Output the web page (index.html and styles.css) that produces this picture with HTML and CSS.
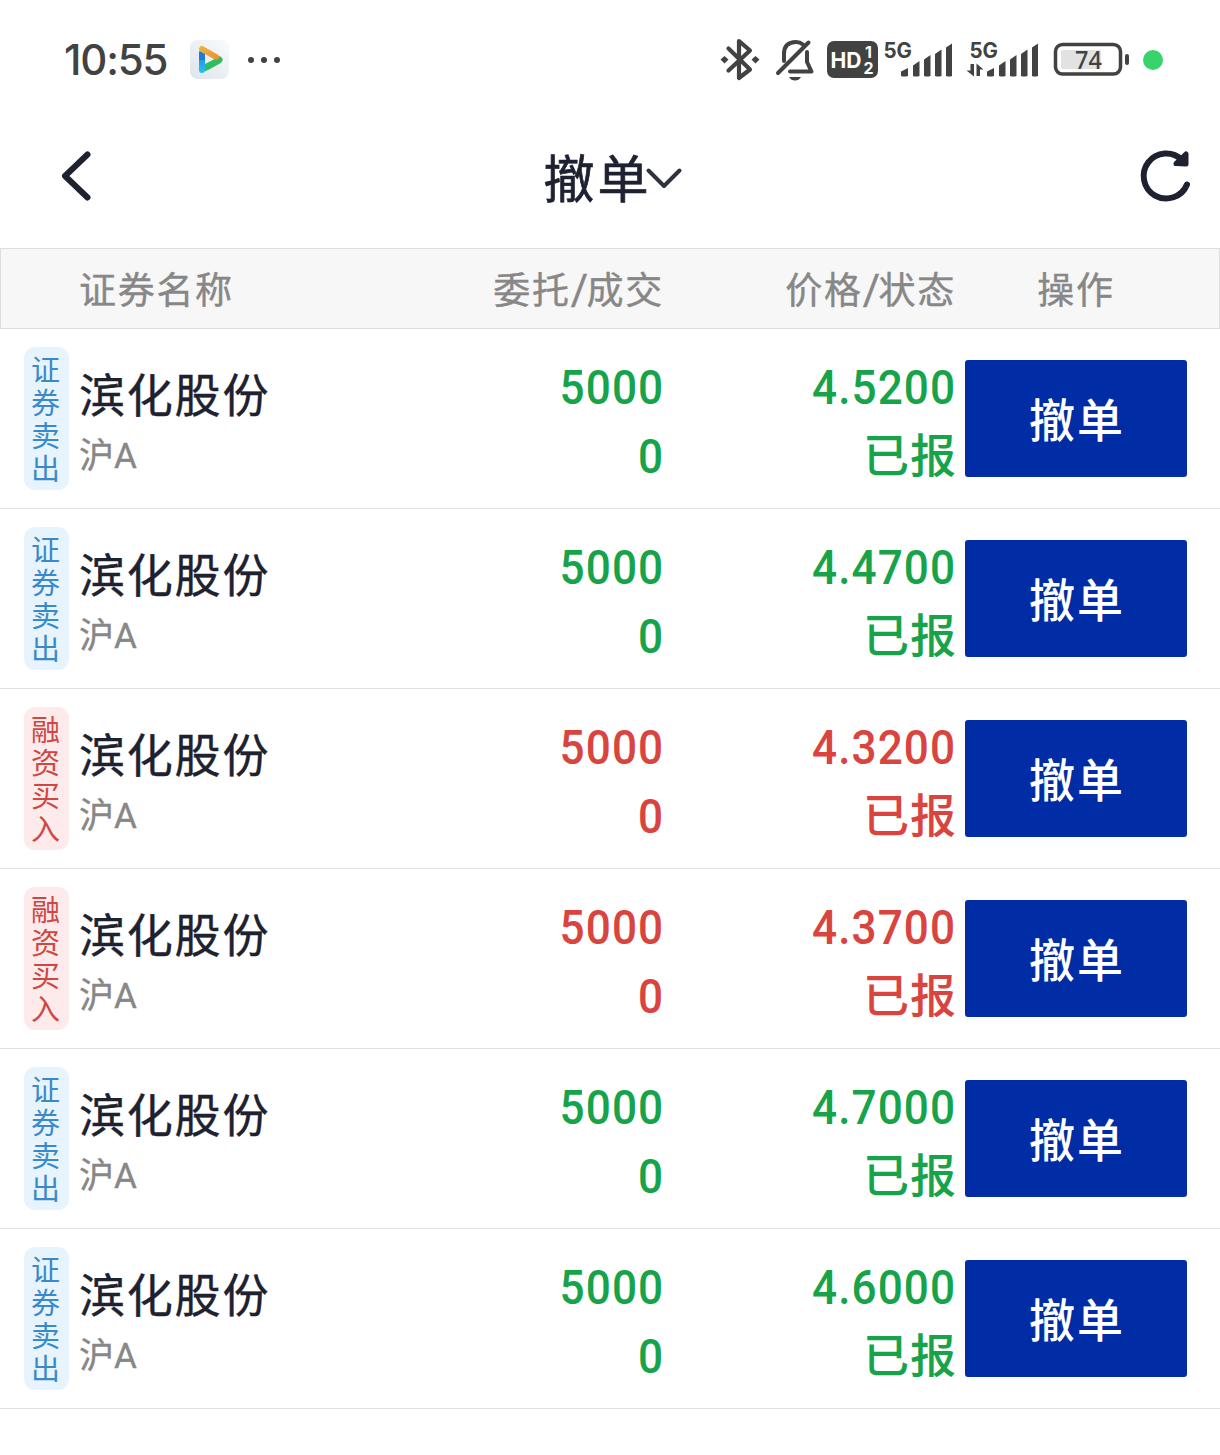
FILE: index.html
```html
<!DOCTYPE html>
<html lang="zh-CN">
<head>
<meta charset="utf-8">
<title>撤单</title>
<link rel="stylesheet" href="styles.css">
</head>
<body>
<div class="status">
  <span class="time">10:55</span>
  <svg class="app" width="40" height="40" viewBox="190 40 40 40">
    <defs>
      <linearGradient id="o" gradientUnits="userSpaceOnUse" x1="200" y1="48" x2="221" y2="59"><stop offset="0" stop-color="#e9b43c"/><stop offset="1" stop-color="#f08a35"/></linearGradient>
      <linearGradient id="b" gradientUnits="userSpaceOnUse" x1="0" y1="48" x2="0" y2="73"><stop offset="0" stop-color="#2478dc"/><stop offset="1" stop-color="#22c4ee"/></linearGradient>
      <linearGradient id="t" x1="1" y1="0" x2="0" y2="1"><stop offset="0" stop-color="#fafbfc"/><stop offset="1" stop-color="#dce4ec"/></linearGradient>
    </defs>
    <rect x="190" y="40" width="39" height="39" rx="8" fill="url(#t)"/>
    <g fill="none" stroke-width="6" stroke-linecap="round">
      <path d="M219.500 59.500L208 66.500" stroke="#31bd61"/>
      <path d="M202 54V70" stroke="url(#b)"/>
      <path d="M202 49L216 57" stroke="url(#o)"/>
    </g>
    <path d="M199 51L205 55V60H199Z" fill="#2478dc"/>
    <path d="M205 64L214 59.500H222.500Q222 62 220 63.500L205 71.500Z" fill="#31bd61"/>
  </svg>
  <svg class="more" width="36" height="8" viewBox="0 0 36 8" fill="#424242"><circle cx="4" cy="4" r="3"/><circle cx="17" cy="4" r="3"/><circle cx="30" cy="4" r="3"/></svg>
  <svg class="system" width="446" height="50" viewBox="720 35 446 50" fill="#424242">
    <path d="M728.500 48.500L750 69.500L739 78V41L750 50.500L728.500 70.500" fill="none" stroke="#424242" stroke-width="4.200" stroke-linejoin="round" stroke-linecap="round"/>
    <path d="M724.500 56l4 3.500-4 4-4-4zM755.500 56l4 3.500-4 4-4-4z"/>
    <g fill="none" stroke="#424242" stroke-width="4" stroke-linecap="round">
      <path d="M784 61V54Q784 42 796 42Q800 42 803 44.500"/>
      <path d="M807 52V62L811.500 71.500H790" stroke-linejoin="round"/>
      <path d="M808.500 42.500L778 73"/>
    </g>
    <path d="M789 77H801Q799 80.500 795 80.500Q791 80.500 789 77Z"/>
    <rect x="827" y="41" width="51" height="37" rx="7"/>
    <g fill="#fff" class="badge-text">
      <text x="830.500" y="67.500" font-size="22" textLength="31" lengthAdjust="spacingAndGlyphs">HD</text>
      <text x="865" y="57.500" font-size="16">1</text>
      <text x="863.500" y="74" font-size="16">2</text>
    </g>
    <g class="net"><text x="883.500" y="58" font-size="21" textLength="28.500" lengthAdjust="spacingAndGlyphs">5G</text><text x="969.500" y="58" font-size="21" textLength="28.500" lengthAdjust="spacingAndGlyphs">5G</text></g>
    <g id="bars"><path d="M901 76V71.500L908 68V76Q904 77 901 76ZM913 76V65.500L919.500 61V76Q916 77 913 76ZM924 76V59.500L930.500 55V76Q927 77 924 76ZM935 76V54L941.500 49.500V76Q938 77 935 76ZM946 76V47.500L952 43.500V76Q949 77 946 76Z"/></g>
    <use href="#bars" x="86"/>
    <path d="M970.500 64h3.500v12.500l-7.500-6h4zM976.500 63.500l7 6h-3.500v6.500h-3.500z"/>
    <rect x="1055.500" y="44.500" width="65" height="29.500" rx="7" fill="#fff" stroke="#424242" stroke-width="3.500"/>
    <path d="M1063 50H1101V69H1063Q1061 69 1061 67V52Q1061 50 1063 50Z" fill="#e2e2e2"/>
    <rect x="1125" y="54" width="4" height="11" rx="2"/>
    <text class="battery" x="1075" y="69" font-size="25" textLength="27" lengthAdjust="spacingAndGlyphs">74</text>
    <circle cx="1153" cy="60" r="10" fill="#38d46b"/>
  </svg>
</div>
<header class="nav">
  <svg width="36" height="56" viewBox="58 148 36 56"><path d="M87.500 154.500L65 176L87.500 197.500" class="stroke back"/></svg>
  <div class="title"><h1>撤单</h1><svg width="38" height="24" viewBox="645 164 38 24"><path d="M648.500 169.500L664 185L679.500 169.500" class="stroke chevron"/></svg></div>
  <svg width="56" height="56" viewBox="1138 148 56 56"><path d="M1187 184.500A22.500 22.500 0 1 1 1182 160" class="stroke reload"/><path d="M1186 154V164L1176 163.500Z" class="stroke tip"/></svg>
</header>
<div class="grid thead"><span class="name-head">证券名称</span><span class="right">委托<i>/</i>成交</span><span class="right">价格<i>/</i>状态</span><span class="op">操作</span></div>
<main>
  <div class="grid row sell"><div class="tag">证券卖出</div><div class="stock"><b>滨化股份</b><small>沪A</small></div><div class="num"><span>5000</span><span>0</span></div><div class="num"><span>4.5200</span><em>已报</em></div><button>撤单</button></div>
  <div class="grid row sell"><div class="tag">证券卖出</div><div class="stock"><b>滨化股份</b><small>沪A</small></div><div class="num"><span>5000</span><span>0</span></div><div class="num"><span>4.4700</span><em>已报</em></div><button>撤单</button></div>
  <div class="grid row buy"><div class="tag">融资买入</div><div class="stock"><b>滨化股份</b><small>沪A</small></div><div class="num"><span>5000</span><span>0</span></div><div class="num"><span>4.3200</span><em>已报</em></div><button>撤单</button></div>
  <div class="grid row buy"><div class="tag">融资买入</div><div class="stock"><b>滨化股份</b><small>沪A</small></div><div class="num"><span>5000</span><span>0</span></div><div class="num"><span>4.3700</span><em>已报</em></div><button>撤单</button></div>
  <div class="grid row sell"><div class="tag">证券卖出</div><div class="stock"><b>滨化股份</b><small>沪A</small></div><div class="num"><span>5000</span><span>0</span></div><div class="num"><span>4.7000</span><em>已报</em></div><button>撤单</button></div>
  <div class="grid row sell"><div class="tag">证券卖出</div><div class="stock"><b>滨化股份</b><small>沪A</small></div><div class="num"><span>5000</span><span>0</span></div><div class="num"><span>4.6000</span><em>已报</em></div><button>撤单</button></div>
</main>
</body>
</html>
```

FILE: styles.css
```css
* { box-sizing: border-box; }
body {
  margin: 0;
  width: 1220px;
  height: 1455px;
  overflow: hidden;
  background: #fff;
  color: #1d2130;
  font-family: Roboto, "Noto Sans CJK SC", sans-serif;
}
svg { display: block; flex: none; }

.status { display: flex; align-items: center; height: 120px; padding-left: 64px; color: #424242; }
.time { width: 126px; font: 500 42px/50px Inter, sans-serif; letter-spacing: -1.2px; }
.more { margin-left: 17px; }
.system { margin-left: auto; margin-right: 54px; }
.badge-text { font-family: Inter, sans-serif; font-weight: 700; }
.net { font-family: Inter, sans-serif; font-weight: 700; }
.battery { font-family: "Noto Sans", sans-serif; font-weight: 500; }

.nav { display: flex; align-items: center; justify-content: space-between; height: 128px; padding: 0 26px 16px 58px; }
.title { display: flex; align-items: center; margin-right: 6px; }
.title h1 { margin: 9px 0 0; font-size: 51px; line-height: 64px; font-weight: 400; letter-spacing: 3px; -webkit-text-stroke: 0.7px; }
.title svg { margin-left: -7px; margin-top: 2px; }
.stroke { fill: none; stroke: #1d2130; stroke-linecap: round; stroke-linejoin: round; }
.back { stroke-width: 6; }
.chevron { stroke-width: 4; stroke: #30333f; }
.reload { stroke-width: 6; }
.tip { stroke-width: 5; fill: #1d2130; }

.grid { display: grid; grid-template-columns: 56px 270px 314px 292px 9px 222px; padding-left: 24px; }
.thead {
  height: 81px;
  padding-left: 22px;
  border: 1px solid #dedede;
  background: #f7f7f7;
  color: #878787;
  font-size: 37px;
  line-height: 86px;
  letter-spacing: 1.7px;
  -webkit-text-stroke: 0.4px;
}
.thead i { font: 400 42px/40px Roboto, sans-serif; letter-spacing: -2.5px; margin-right: 1px; }
.name-head { grid-column: 2; }
.right { text-align: right; margin-right: -1px; }
.op { grid-column: 6; text-align: center; margin-left: 2px; }

.row { height: 180px; border-bottom: 1px solid #e0e0e0; }
.tag {
  width: 45px;
  height: 143px;
  margin-top: 18px;
  padding: 8px 8px 0 7px;
  border-radius: 11px;
  font-size: 29px;
  line-height: 33px;
  word-break: break-all;
}
.sell .tag { background: #e8f4fd; color: #3a8acb; }
.buy .tag { background: #fdeaea; color: #cf4644; }
.stock { display: flex; flex-direction: column; padding-top: 37px; margin-left: -1px; }
.stock b { font-size: 46px; line-height: 60px; font-weight: 400; letter-spacing: 1.8px; -webkit-text-stroke: 0.4px; }
.stock small { font-size: 35px; line-height: 61px; color: #878787; -webkit-text-stroke: 0.4px; }
.num { display: flex; flex-direction: column; align-items: flex-end; padding-top: 24px; line-height: 69px; }
.num span { font-size: 49px; font-weight: 500; transform: scaleX(.9); transform-origin: right; letter-spacing: 1.2px; }
.num em { font-size: 46px; font-style: normal; font-weight: 500; letter-spacing: 1px; margin-right: -1px; }
.sell .num { color: #16a34a; }
.buy .num { color: #d9443f; }
.row button {
  grid-column: 6;
  height: 117px;
  margin-top: 31px;
  padding: 0 0 3px 2px;
  border: 0;
  border-radius: 3px;
  background: #002da5;
  color: #fff;
  font: 500 46px/60px "Noto Sans CJK SC", sans-serif;
  letter-spacing: 2px;
}
```
